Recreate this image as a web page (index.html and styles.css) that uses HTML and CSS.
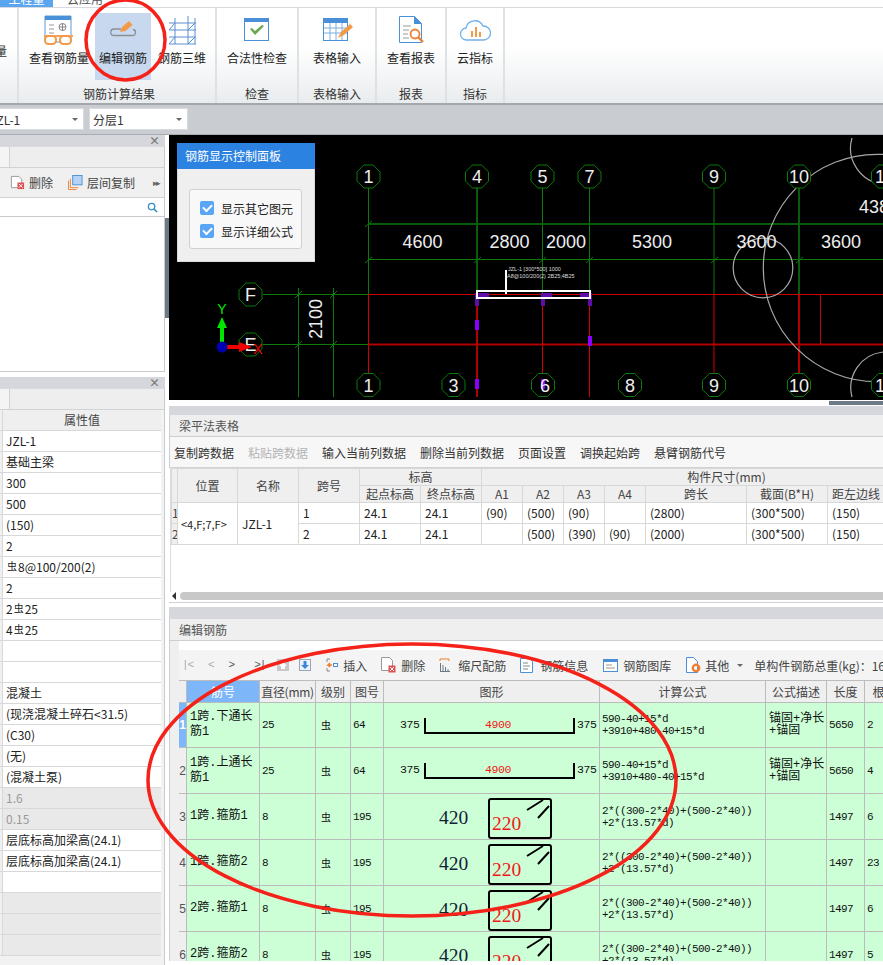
FILE: index.html
```html
<!DOCTYPE html>
<html lang="zh">
<head>
<meta charset="utf-8">
<title>编辑钢筋</title>
<link rel="stylesheet" href="styles.css">
</head>
<body>
<div class="app">
  <div class="tabs">
    <div class="tab-on"><span>工程量</span></div>
    <div class="tab-off"><span>云应用</span></div>
  </div>

  <div class="ribbon">
    <div class="group g0"><div class="btns"><div class="cut">量</div></div></div>
    <div class="group g1">
      <div class="btns">
        <div class="btn w72">
          <svg class="ico" viewBox="0 0 32 32"><path d="M2 1h26v26H2z" fill="#fff" stroke="#5b9bd5"/><path d="M2 1h26v4H2z" fill="#4a90d9"/><path d="M6 10h5M6 14h5M6 18h5" stroke="#999"/><path d="M16 12h7M19.500 8v8" stroke="#888" fill="none"/><circle cx="19.500" cy="12" r="3.500" fill="none" stroke="#888"/><path d="M1 21h29" stroke="#f4a460" stroke-width="2"/><rect x="2" y="21" width="11" height="8" rx="3.500" fill="#fff" stroke="#f29a4a" stroke-width="2"/><rect x="17" y="21" width="11" height="8" rx="3.500" fill="#fff" stroke="#f29a4a" stroke-width="2"/></svg>
          <span>查看钢筋量</span>
        </div>
        <div class="btn w56 active">
          <svg class="ico" viewBox="0 0 32 32"><path d="M14 14H7a3 3 0 0 0 0 6.500h18a3 3 0 0 0 1-6" fill="none" stroke="#8a8f96" stroke-width="1.300"/><path d="M13 17l2-5 7-6 3.500 4-7 6z" fill="#f29a4a"/></svg>
          <span>编辑钢筋</span>
        </div>
        <div class="btn w58">
          <svg class="ico" viewBox="0 0 32 32" fill="none" stroke="#5b8fd0"><path d="M3 8h27M3 15h27M3 22h27M3 29h27M9 3v26M22 1v28M29 3v26"/><path d="M3 15l6-7M3 29l6-7M22 15l7-7M22 29l7-7"/></svg>
          <span>钢筋三维</span>
        </div>
      </div>
      <div class="glabel">钢筋计算结果</div>
    </div>
    <div class="group g2">
      <div class="btns">
        <div class="btn wfull">
          <svg class="ico" viewBox="0 0 32 32"><rect x="3.500" y="3.500" width="24" height="22" fill="#fff" stroke="#4a90d9"/><path d="M3 3h25v4H3z" fill="#4a90d9"/><path d="M9 14l5 6 9-9-2-1-7 6-3-3z" fill="#6aa84f"/></svg>
          <span>合法性检查</span>
        </div>
      </div>
      <div class="glabel">检查</div>
    </div>
    <div class="group g3">
      <div class="btns">
        <div class="btn wfull">
          <svg class="ico" viewBox="0 0 32 32"><rect x="2.500" y="3.500" width="24" height="22" fill="#fff" stroke="#4a90d9"/><path d="M2 3h25v5H2z" fill="#4a90d9"/><path d="M3 13h23M3 18h23M9 8v17M15 8v17M21 8v17" stroke="#7aaee0"/><path d="M17 23l3-6 9-8 3 3-9 8z" fill="#f29a4a"/></svg>
          <span>表格输入</span>
        </div>
      </div>
      <div class="glabel">表格输入</div>
    </div>
    <div class="group g4">
      <div class="btns">
        <div class="btn wfull">
          <svg class="ico" viewBox="0 0 32 32"><path d="M4.500 1.500h15l7 7v19h-22z" fill="#fff" stroke="#4a90d9"/><path d="M19 1l8 8h-8z" fill="#4a90d9"/><path d="M8 11h8M8 15h6M8 19h5M8 23h6" stroke="#999"/><circle cx="20" cy="19" r="4.500" fill="#fff" stroke="#f07f2e" stroke-width="1.800"/><path d="M23 22l5 5" stroke="#f07f2e" stroke-width="2.400"/></svg>
          <span>查看报表</span>
        </div>
      </div>
      <div class="glabel">报表</div>
    </div>
    <div class="group g5">
      <div class="btns">
        <div class="btn wfull">
          <svg class="ico" viewBox="0 0 32 32"><path d="M8 25a6 6 0 0 1-1-12 9 9 0 0 1 17-2 7 7 0 0 1 1 14z" fill="#fff" stroke="#6fb1ea" stroke-width="1.300"/><path d="M12 16h2v6h-2zM16 12h2v10h-2zM20 17h2v5h-2z" fill="#f29a4a"/></svg>
          <span>云指标</span>
        </div>
      </div>
      <div class="glabel">指标</div>
    </div>
  </div>

  <div class="selbar">
    <div class="sel s1"><span>JZL-1</span><i class="caret"></i></div>
    <div class="sel s2"><span>分层1</span><i class="caret"></i></div>
  </div>

  <div class="main">
    <aside class="left">
      <section class="lp lp1">
        <div class="lp-head"><span class="close">×</span></div>
        <div class="lp-tabs"><div class="lp-tab"></div></div>
        <div class="lp-tools">
          <svg class="tool-ico" viewBox="0 0 16 16"><path d="M1.500 1.500h8l3 3v9h-11z" fill="#fff" stroke="#999"/><rect x="8" y="8" width="7" height="7" fill="#e05050"/><path d="M9.500 9.500l4 4M13.500 9.500l-4 4" stroke="#fff"/></svg>
          <span>删除</span>
          <svg class="tool-ico t2" viewBox="0 0 16 16"><path d="M.5 6v9.500H9" fill="none" stroke="#f07f2e"/><path d="M2.500 4v9.500H11" fill="none" stroke="#f07f2e"/><rect x="5" y=".5" width="10" height="10" fill="#b5d3f7" stroke="#4a90d9"/></svg>
          <span>层间复制</span>
          <em class="more">▸▸</em>
        </div>
        <div class="lp-search">
          <svg class="search" viewBox="0 0 12 12"><circle cx="5" cy="5" r="3.500" fill="none" stroke="#2f8fc4" stroke-width="1.400"/><path d="M7.500 7.500l3.500 3.500" stroke="#2f8fc4" stroke-width="1.600"/></svg>
        </div>
        <div class="lp-list"></div>
      </section>
      <section class="lp lp2">
        <div class="lp-head"><span class="close">×</span></div>
        <div class="lp-tabs"><div class="lp-tab"></div></div>
        <div class="prop">
          <div class="prow phead"><b></b><span>属性值</span></div>
          <div class="prow"><b></b><span>JZL-1</span></div>
          <div class="prow"><b></b><span>基础主梁</span></div>
          <div class="prow"><b></b><span>300</span></div>
          <div class="prow"><b></b><span>500</span></div>
          <div class="prow"><b></b><span>(150)</span></div>
          <div class="prow"><b></b><span>2</span></div>
          <div class="prow"><b></b><span><small class="gr">虫</small>8@100/200(2)</span></div>
          <div class="prow"><b></b><span>2</span></div>
          <div class="prow"><b></b><span>2<small class="gr">虫</small>25</span></div>
          <div class="prow"><b></b><span>4<small class="gr">虫</small>25</span></div>
          <div class="prow"><b></b><span></span></div>
          <div class="prow"><b></b><span></span></div>
          <div class="prow"><b></b><span>混凝土</span></div>
          <div class="prow"><b></b><span>(现浇混凝土碎石&lt;31.5)</span></div>
          <div class="prow"><b></b><span>(C30)</span></div>
          <div class="prow"><b></b><span>(无)</span></div>
          <div class="prow"><b></b><span>(混凝土泵)</span></div>
          <div class="prow off"><b></b><span>1.6</span></div>
          <div class="prow off"><b></b><span>0.15</span></div>
          <div class="prow"><b></b><span>层底标高加梁高(24.1)</span></div>
          <div class="prow"><b></b><span>层底标高加梁高(24.1)</span></div>
          <div class="prow"><b></b><span></span></div>
          <div class="prow off"><b></b><span></span></div>
          <div class="prow off"><b></b><span></span></div>
          <div class="prow off"><b></b><span></span></div>
        </div>
      </section>
    </aside>

    <div class="splitter"><div class="grip"></div></div>

    <div class="right">
      <div class="canvas">
        <svg class="cad" viewBox="169 135 714 265">
          <defs>
            <polygon id="oct" points="-4.600,-11.500 4.600,-11.500 11.500,-4.600 11.500,4.600 4.600,11.500 -4.600,11.500 -11.500,4.600 -11.500,-4.600" fill="#000" stroke="#0c7a0c"/>
          </defs>
          <g stroke="#0c7a0c" fill="none">
            <path d="M368.500 188V294M477 188V294M542.500 188V294M589.500 188V294M714 188V294M799 188V294"/>
            <path d="M368 259.500H883M263 294.500H368M263 344.500H368M298.500 288V397M333.500 288V397"/>
            <path d="M477 188V294M799 188V294" stroke-width="2" stroke="#0a5c0a"/>
            <path d="M368 224H883" stroke-width="2" stroke="#0a5c0a"/>
            <path d="M365 227l7-6M365 263l7-6M474 263l7-6M539 263l7-6M586 263l7-6M711 263l7-6M796 263l7-6M295 298l7-7M330 298l7-7M295 348l7-7M330 348l7-7"/>
          </g>
          <g stroke="#d40000" fill="none">
            <path d="M368.500 294V375M542.500 294V397M589.500 294V397M714 294V397"/>
            <path d="M368 294.500H883M820.500 294V344" stroke="#c80000"/>
            <path d="M477 294V397M799 294V397" stroke-width="2" stroke="#b00000"/>
            <path d="M368 344.500H883" stroke-width="2" stroke="#b00000"/>
          </g>
          <g fill="none" stroke="#a8a8a8" stroke-width="1.200">
            <circle cx="877" cy="268" r="113.700"/>
            <circle cx="763" cy="268" r="29.800"/>
            <path d="M852 138a36 36 0 0 0 31 46"/>
            <path d="M852 397a36 36 0 0 1 31-45"/>
          </g>
          <g>
            <use href="#oct" x="368.500" y="176.500"/><use href="#oct" x="477" y="176.500"/><use href="#oct" x="542.500" y="176.500"/><use href="#oct" x="589.500" y="176.500"/><use href="#oct" x="714" y="176.500"/><use href="#oct" x="799" y="176.500"/><use href="#oct" x="883" y="176.500"/>
            <use href="#oct" x="368.500" y="385"/><use href="#oct" x="453.500" y="385"/><use href="#oct" x="543" y="385"/><use href="#oct" x="630" y="385"/><use href="#oct" x="714" y="385"/><use href="#oct" x="799" y="385"/><use href="#oct" x="883" y="385"/>
            <use href="#oct" x="250.500" y="294.500"/><use href="#oct" x="250.500" y="344.500"/>
          </g>
          <g fill="#5f0ea8">
            <rect x="475" y="293" width="4" height="13"/><rect x="476" y="293" width="13" height="5"/>
            <rect x="541" y="293" width="4" height="13"/><rect x="541" y="293" width="11" height="5"/>
            <rect x="588" y="293" width="4" height="13"/><rect x="580" y="293" width="10" height="5"/>
          </g>
          <rect x="477" y="291" width="113" height="7" fill="none" stroke="#fff" stroke-width="2"/>
          <path d="M506 270V294" stroke="#fff" stroke-width="2"/>
          <g fill="#8a00ff">
            <rect x="475" y="320" width="4" height="10"/><rect x="588" y="336" width="4" height="10"/>
            <rect x="475" y="379" width="4" height="10"/><rect x="541" y="379" width="4" height="10"/>
          </g>
          <g class="cad-t">
            <text x="368.500" y="183">1</text><text x="477" y="183">4</text><text x="542.500" y="183">5</text><text x="589.500" y="183">7</text><text x="714" y="183">9</text><text x="799" y="183">10</text><text x="880" y="183">1</text>
            <text x="368.500" y="391.500">1</text><text x="453.500" y="391.500">3</text><text x="545" y="391.500">6</text><text x="630" y="391.500">8</text><text x="714" y="391.500">9</text><text x="799" y="391.500">10</text><text x="880" y="391.500">1</text>
            <text x="250.500" y="301">F</text><text x="250.500" y="351">E</text>
            <text x="422.500" y="248">4600</text><text x="509.500" y="248">2800</text><text x="566" y="248">2000</text><text x="652" y="248">5300</text><text x="756.500" y="248">3600</text><text x="841" y="248">3600</text><text x="874" y="213">438</text>
            <text x="322" y="319" transform="rotate(-90 322 319)">2100</text>
          </g>
          <g class="cad-tiny">
            <text x="508" y="271">JZL-1 [300*500] 1000</text>
            <text x="507" y="278">A8@100/200(2) 2B25;4B25</text>
          </g>
          <path d="M222 346V326" stroke="#00e600" stroke-width="4"/>
          <path d="M222 317l5 11h-10z" fill="#00e600"/>
          <path d="M222 347H240" stroke="#f00000" stroke-width="4"/>
          <path d="M252 347l-13 5v-10z" fill="#f00000"/>
          <circle cx="222" cy="347" r="5.500" fill="#0000b0"/>
          <text class="ax-y" x="222" y="314">Y</text>
          <text class="ax-x" x="258" y="354">X</text>
        </svg>
        <div class="ctl">
          <div class="ctl-head">钢筋显示控制面板</div>
          <div class="ctl-body">
            <div class="ctl-box">
              <label class="chk"><i class="tick"></i><span>显示其它图元</span></label>
              <label class="chk"><i class="tick"></i><span>显示详细公式</span></label>
            </div>
          </div>
        </div>
      </div>
      <div class="strip"><div class="strip-thumb"></div></div>

      <section class="pn pn1">
        <div class="pn-head"></div>
        <div class="pn-title">梁平法表格</div>
        <div class="beam-tools">
          <span>复制跨数据</span><span class="dis">粘贴跨数据</span><span>输入当前列数据</span><span>删除当前列数据</span><span>页面设置</span><span>调换起始跨</span><span>悬臂钢筋代号</span>
        </div>
        <div class="beam-wrap">
          <table class="beam">
            <colgroup><col class="c0"><col class="c1"><col class="c2"><col class="c3"><col class="c4"><col class="c4"><col class="c5"><col class="c5"><col class="c5"><col class="c5"><col class="c6"><col class="c7"><col class="c8"></colgroup>
            <tr class="h1"><th class="rn" rowspan="2"></th><th rowspan="2">位置</th><th rowspan="2">名称</th><th rowspan="2">跨号</th><th colspan="2">标高</th><th colspan="7">构件尺寸(mm)</th></tr>
            <tr class="h2"><th>起点标高</th><th>终点标高</th><th>A1</th><th>A2</th><th>A3</th><th>A4</th><th>跨长</th><th>截面(B*H)</th><th class="ll">距左边线</th></tr>
            <tr><th class="rn">1</th><td rowspan="2" class="pos">&lt;4,F;7,F&gt;</td><td rowspan="2">JZL-1</td><td>1</td><td>24.1</td><td>24.1</td><td>(90)</td><td>(500)</td><td>(90)</td><td></td><td>(2800)</td><td>(300*500)</td><td>(150)</td></tr>
            <tr><th class="rn">2</th><td>2</td><td>24.1</td><td>24.1</td><td></td><td>(500)</td><td>(390)</td><td>(90)</td><td>(2000)</td><td>(300*500)</td><td>(150)</td></tr>
          </table>
        </div>
      </section>

      <section class="pn pn2">
        <div class="pn-head"></div>
        <div class="pn-title">编辑钢筋</div>
        <div class="rebar-area">
          <div class="rebar-tools">
            <span class="nav n1">|&lt;</span><span class="nav n2">&lt;</span><span class="nav n3">&gt;</span><span class="nav n4">&gt;|</span>
            <svg class="t-ico up" viewBox="0 0 12 12"><rect width="12" height="12" fill="#c9c9c9"/><path d="M6 3l4 4H8v3H4V7H2z" fill="#fff"/></svg>
            <svg class="t-ico down" viewBox="0 0 12 12"><rect x=".5" y=".5" width="11" height="11" fill="#eef3f8" stroke="#98a8b8"/><path d="M6 10L2 6h2.500V2h3v4H10z" fill="#3a87d8"/></svg>
            <svg class="t-ico ins" viewBox="0 0 12 14"><path d="M1 1h3M1 13h3M1 1v3M1 13v-3" stroke="#888" fill="none"/><path d="M6 7l-4 0 2-2M2 7l2 2" stroke="#f07f2e" stroke-width="1.500" fill="none"/><rect x="7.500" y="5.500" width="4" height="3" fill="#fff" stroke="#4a90d9"/></svg>
            <span class="t-txt">插入</span>
            <svg class="t-ico del" viewBox="0 0 15 16"><path d="M.5.500h8l3 3v10h-11z" fill="#fff" stroke="#999"/><rect x="7.500" y="8.500" width="7" height="7" fill="#e05050"/><path d="M9 10l4 4M13 10l-4 4" stroke="#fff"/></svg>
            <span class="t-txt">删除</span>
            <svg class="t-ico scl" viewBox="0 0 12 14"><path d="M1 1h9M1 1v2M10 1v2" stroke="#f07f2e" fill="none"/><path d="M1.500 5v8M4 7v6M6.500 9v4M9 11v2M1 13.500h10" stroke="#6a7a88"/></svg>
            <span class="t-txt">缩尺配筋</span>
            <svg class="t-ico inf" viewBox="0 0 13 15"><path d="M.5.500h9l3 3v11H.5z" fill="#fff" stroke="#4a90d9"/><path d="M3 5h5M3 8h7M3 11h5" stroke="#888"/></svg>
            <span class="t-txt">钢筋信息</span>
            <svg class="t-ico lib" viewBox="0 0 15 13"><rect x=".5" y=".5" width="14" height="12" fill="#fff" stroke="#4a90d9"/><path d="M0 0h15v3H0z" fill="#4a90d9"/><path d="M3 6h6M3 9h9" stroke="#998"/></svg>
            <span class="t-txt">钢筋图库</span>
            <svg class="t-ico oth" viewBox="0 0 15 16"><path d="M.5.500h7l4 4v11h-11z" fill="#fff" stroke="#4a90d9"/><circle cx="10" cy="11" r="3.200" fill="none" stroke="#f07f2e" stroke-width="2.400"/></svg>
            <span class="t-txt">其他</span>
            <i class="caret tc"></i>
            <span class="t-txt total">单构件钢筋总重(kg)：16</span>
          </div>
          <table class="rebar">
            <colgroup><col class="r0"><col class="r1"><col class="r2"><col class="r3"><col class="r4"><col class="r5"><col class="r6"><col class="r7"><col class="r8"><col class="r9"></colgroup>
            <tr class="rh"><th class="no"></th><th class="sel-h">筋号</th><th>直径(mm)</th><th>级别</th><th>图号</th><th>图形</th><th>计算公式</th><th>公式描述</th><th>长度</th><th>根数</th></tr>
            <tr class="rr first"><th class="no cur">1</th><td class="nm">1跨.下通长筋1</td><td class="m">25</td><td class="gd">虫</td><td class="m">64</td><td class="sh"><svg class="shape" viewBox="0 0 216 45"><text class="sm" x="16" y="25">375</text><text class="sm red" x="101" y="25">4900</text><text class="sm" x="193" y="25">375</text><path d="M41 15v15h149V15" fill="none" stroke="#000" stroke-width="2"/></svg></td><td class="f">590-40+15*d<br>+3910+480-40+15*d</td><td class="d">锚固+净长<br>+锚固</td><td class="m">5650</td><td class="m">2</td></tr>
            <tr class="rr"><th class="no">2</th><td class="nm">1跨.上通长筋1</td><td class="m">25</td><td class="gd">虫</td><td class="m">64</td><td class="sh"><svg class="shape" viewBox="0 0 216 45"><text class="sm" x="16" y="25">375</text><text class="sm red" x="101" y="25">4900</text><text class="sm" x="193" y="25">375</text><path d="M41 15v15h149V15" fill="none" stroke="#000" stroke-width="2"/></svg></td><td class="f">590-40+15*d<br>+3910+480-40+15*d</td><td class="d">锚固+净长<br>+锚固</td><td class="m">5650</td><td class="m">4</td></tr>
            <tr class="rr"><th class="no">3</th><td class="nm">1跨.箍筋1</td><td class="m">8</td><td class="gd">虫</td><td class="m">195</td><td class="sh"><svg class="shape" viewBox="0 0 216 45"><text class="ser" x="55" y="30">420</text><rect x="105" y="5" width="62" height="39" rx="2" fill="none" stroke="#000" stroke-width="2"/><text class="ser red" x="108" y="36">220</text><path d="M143 16l16-10M154 24l11-12" stroke="#000" stroke-width="2"/></svg></td><td class="f">2*((300-2*40)+(500-2*40))<br>+2*(13.57*d)</td><td class="d"></td><td class="m">1497</td><td class="m">6</td></tr>
            <tr class="rr"><th class="no">4</th><td class="nm">1跨.箍筋2</td><td class="m">8</td><td class="gd">虫</td><td class="m">195</td><td class="sh"><svg class="shape" viewBox="0 0 216 45"><text class="ser" x="55" y="30">420</text><rect x="105" y="5" width="62" height="39" rx="2" fill="none" stroke="#000" stroke-width="2"/><text class="ser red" x="108" y="36">220</text><path d="M143 16l16-10M154 24l11-12" stroke="#000" stroke-width="2"/></svg></td><td class="f">2*((300-2*40)+(500-2*40))<br>+2*(13.57*d)</td><td class="d"></td><td class="m">1497</td><td class="m">23</td></tr>
            <tr class="rr"><th class="no">5</th><td class="nm">2跨.箍筋1</td><td class="m">8</td><td class="gd">虫</td><td class="m">195</td><td class="sh"><svg class="shape" viewBox="0 0 216 45"><text class="ser" x="55" y="30">420</text><rect x="105" y="5" width="62" height="39" rx="2" fill="none" stroke="#000" stroke-width="2"/><text class="ser red" x="108" y="36">220</text><path d="M143 16l16-10M154 24l11-12" stroke="#000" stroke-width="2"/></svg></td><td class="f">2*((300-2*40)+(500-2*40))<br>+2*(13.57*d)</td><td class="d"></td><td class="m">1497</td><td class="m">6</td></tr>
            <tr class="rr"><th class="no">6</th><td class="nm">2跨.箍筋2</td><td class="m">8</td><td class="gd">虫</td><td class="m">195</td><td class="sh"><svg class="shape" viewBox="0 0 216 45"><text class="ser" x="55" y="30">420</text><rect x="105" y="5" width="62" height="39" rx="2" fill="none" stroke="#000" stroke-width="2"/><text class="ser red" x="108" y="36">220</text><path d="M143 16l16-10M154 24l11-12" stroke="#000" stroke-width="2"/></svg></td><td class="f">2*((300-2*40)+(500-2*40))<br>+2*(13.57*d)</td><td class="d"></td><td class="m">1497</td><td class="m">5</td></tr>
          </table>
        </div>
      </section>
    </div>
  </div>

  <svg class="marks" viewBox="0 0 883 965">
    <path class="sb-arrow" d="M172 596l4-4v8z"/>
    <path class="sb-thumb" d="M184 592H883V600H184a4 4 0 0 1 0-8z"/>
    <ellipse cx="125.500" cy="40" rx="39.500" ry="40" />
    <ellipse cx="412" cy="780" rx="264" ry="136" />
  </svg>
</div>
</body>
</html>
```

FILE: styles.css
```css
* { box-sizing: border-box; }
html, body { margin: 0; padding: 0; height: 100%; overflow: hidden; background: #fff; }
body { font-family: "Noto Sans CJK SC", "Liberation Sans", sans-serif; font-size: 12px; color: #333; }
.app { position: relative; width: 883px; height: 965px; overflow: hidden; display: flex; flex-direction: column; }

/* top tabs */
.tabs { height: 8px; display: flex; border-bottom: 1px solid #d8dade; overflow: hidden; flex: none; }
.tab-on { width: 53px; height: 8px; background: #5aa5f0; color: #fff; text-align: center; position: relative; }
.tab-off { margin-left: 14px; color: #555; }
.tabs span { display: block; line-height: 16px; margin-top: -9px; }

/* ribbon */
.ribbon { height: 97px; flex: none; display: flex; background: linear-gradient(#fff 40%, #e9ecee); border-bottom: 2px solid #a4a8ad; }
.group { display: flex; flex-direction: column; border-right: 2px solid #dfe2e5; height: 95px; }
.g0 { width: 19px; }
.g1 { width: 198px; padding-left: 4px; }
.g2 { width: 82px; }
.g3 { width: 78px; }
.g4 { width: 70px; }
.g5 { width: 58px; }
.btns { display: flex; height: 74px; padding-top: 5px; flex: none; }
.cut { width: 100%; margin-left: -5px; padding-top: 29px; }
.btn { display: flex; flex-direction: column; align-items: center; height: 67px; color: #222; white-space: nowrap; overflow: visible; }
.btn span { line-height: 16px; margin-top: 3px; }
.w72 { width: 72px; }
.w56 { width: 56px; }
.w58 { width: 58px; margin-left: 2px; }
.wfull { width: 100%; }
.active { background: #c8d8ee; }
.ico { width: 32px; height: 32px; display: block; margin-top: 2px; flex: none; }
.glabel { text-align: center; line-height: 16px; color: #333; padding-top: 4px; }

/* selectors */
.selbar { height: 30px; flex: none; background: #c9ccd1; border-bottom: 1px solid #a9adb2; display: flex; gap: 5px; padding-top: 3px; }
.sel { height: 22px; background: #fff; border: 1px solid #d8dade; display: flex; align-items: center; justify-content: space-between; padding: 0 5px 0 3px; color: #333; overflow: hidden; }
.s1 { width: 85px; padding-left: 0; margin-left: -1px; }
.s1 span { margin-left: -10px; }
.s2 { width: 99px; }
.caret { width: 0; height: 0; border: 3px solid transparent; border-top: 3px solid #666; border-bottom: 0; display: block; }

/* main */
.main { flex: 1; min-height: 0; display: flex; }
.left { width: 165px; flex: none; background: #fff; }
.lp-head { height: 11px; background: #d5d7dc; position: relative; }
.close { position: absolute; right: 5px; top: -2px; line-height: 14px; font-size: 11px; font-weight: 700; color: #777; }
.lp-tabs { height: 22px; background: #eee; border-top: 1px solid #d8dade; border-bottom: 1px solid #d0d2d6; border-right: 1px solid #c8cacd; }
.lp-tab { width: 10px; height: 100%; background: #f4f4f4; border-right: 1px solid #d0d2d6; }
.lp-tools { height: 30px; background: #f0f0f0; border-bottom: 1px solid #d0d2d6; border-right: 1px solid #c8cacd; display: flex; align-items: center; color: #444; padding-left: 10px; white-space: nowrap; }
.tool-ico { width: 15px; height: 15px; margin-right: 4px; flex: none; }
.t2 { margin-left: 15px; }
.more { font-style: normal; color: #666; font-size: 9px; margin-left: auto; margin-right: 2px; letter-spacing: -2px; padding-right: 3px; }
.lp-search { height: 19px; background: #fff; border-bottom: 1px solid #c8cacd; border-right: 1px solid #c8cacd; display: flex; justify-content: flex-end; align-items: center; padding-right: 6px; }
.search { width: 11px; height: 11px; }
.lp-list { height: 155px; background: #fff; border-right: 1px solid #c8cacd; border-bottom: 1px solid #c8cacd; }
.lp1 { height: 242px; }
.prop { height: 568px; border-right: 1px solid #c8cacd; padding-right: 3px; background: #f2f2f2; }
.prow { height: 21px; display: flex; border-bottom: 1px solid #d8d8d8; background: #fff; line-height: 20px; color: #222; }
.prow b { width: 3px; border-right: 1px solid #d8d8d8; flex: none; background: #f0f0f0; }
.prow span { padding-left: 3px; white-space: nowrap; }
.gr { font-size: 10px; position: relative; top: -2px; margin: 0 1px; }
.phead { background: #efefef; color: #444; }
.phead span { flex: 1; text-align: center; padding: 0; }
.off { background: #e9e9e9; color: #999; }

/* splitter */
.splitter { width: 4px; flex: none; background: #fff; padding-top: 83px; }
.grip { height: 100px; background: #6c7a85; }

/* right */
.right { width: 714px; flex: none; }
.canvas { height: 265px; background: #000; position: relative; overflow: hidden; }
.cad { display: block; width: 714px; height: 265px; }
.cad-t text { fill: #eee; font-family: "Liberation Sans", sans-serif; font-size: 18px; text-anchor: middle; }
.cad-tiny text { fill: #ddd; font-family: "Liberation Sans", sans-serif; font-size: 5.500px; }
.ax-y, .ax-x { font-family: "Liberation Sans", sans-serif; font-size: 14px; text-anchor: middle; }
.ax-y { fill: #00e600; }
.ax-x { fill: #f00000; }
.ctl { position: absolute; left: 8px; top: 8px; width: 138px; height: 119px; background: #efefef; border: 1px solid #d8dade; }
.ctl-head { height: 26px; background: #2c82e0; color: #fff; line-height: 25px; padding-left: 8px; font-size: 12px; margin: -1px -1px 0; }
.ctl-body { padding: 20px 11px 0; }
.ctl-box { width: 113px; height: 60px; background: #f8f8f8; border: 1px solid #cfd1d5; border-radius: 3px; padding: 9px 0 0 10px; display: flex; flex-direction: column; gap: 5px; }
.chk { display: flex; align-items: center; height: 18px; color: #222; white-space: nowrap; }
.tick { width: 14px; height: 14px; background: #5aa5f5; border-radius: 2px; margin-right: 7px; flex: none; position: relative; }
.tick::after { content: ""; position: absolute; left: 3px; top: 2.500px; width: 7px; height: 4px; border-left: 2px solid #fff; border-bottom: 2px solid #fff; transform: rotate(-45deg); }

.strip { height: 6px; background: #fff; display: flex; justify-content: flex-end; align-items: flex-start; padding-top: 1px; }
.strip-thumb { width: 54px; height: 4px; background: #6c7a85; }
.pn-head { height: 9px; background: #d5d7dc; }
.pn-title { height: 22px; background: #efefef; border-bottom: 1px solid #ccced2; border-left: 1px solid #ccced2; color: #555; line-height: 21px; padding-left: 9px; }
.pn1 { height: 197px; border-bottom: 1px solid #d0d2d6; overflow: hidden; }
.beam-tools { height: 31px; background: #f7f7f7; border-bottom: 1px solid #d0d2d6; border-left: 1px solid #ccced2; display: flex; align-items: center; gap: 14px; padding-left: 4px; white-space: nowrap; color: #333; }
.dis { color: #b4b4b4; }
.beam-wrap { margin-left: 1px; width: 713px; height: 124px; overflow: hidden; border-left: 1px solid #ddd; }
.beam { border-collapse: collapse; table-layout: fixed; width: 800px; }
.c0 { width: 6px; } .c1 { width: 60px; } .c2 { width: 61px; } .c3 { width: 61px; } .c4 { width: 61px; }
.c5 { width: 41px; } .c6 { width: 101px; } .c7 { width: 81px; } .c8 { width: 144px; }
.beam th, .beam td { border: 1px solid #d8d8d8; padding: 0 4px; height: 17px; line-height: 16px; font-weight: 400; overflow: hidden; white-space: nowrap; text-align: left; color: #222; }
.beam th { background: #efefef; text-align: center; color: #444; padding: 0; }
.beam .ll { text-align: left; padding-left: 4px; }
.beam tr:nth-child(n+3) td, .beam tr:nth-child(n+3) th { height: 21px; }
.h2 th { height: 17px; }
.beam .rn { background: #efefef; text-align: left; padding-left: 0; font-size: 12px; }
.beam .pos { font-size: 11px; padding-left: 3px; }
.pn2 { margin-top: 4px; }
.pn2 .pn-head { height: 12px; }
.rebar-area { background: #fff; padding: 9px 0 0 0; position: relative; height: 320px; overflow: hidden; }
.rebar-tools { height: 30px; margin-left: 9px; width: 705px; border-left: 1px solid #bcbcbc; background: #f4f4f4; display: flex; align-items: center; color: #444; white-space: nowrap; font-size: 12px; }
.rebar-area::before { content: ""; position: absolute; left: 0; top: 0; bottom: 0; width: 9px; background: #efefef; border-left: 1px solid #ccced2; }
.nav { font-family: "Liberation Mono", monospace; font-size: 11px; color: #555; width: 11px; text-align: center; }
.n1 { margin-left: 3px; color: #aaa; letter-spacing: -1px; }
.n2 { margin-left: 15px; color: #aaa; }
.n3 { margin-left: 14px; }
.n4 { margin-left: 19px; letter-spacing: -1px; }
.t-ico { flex: none; display: block; }
.up { width: 12px; height: 12px; margin-left: 12px; }
.down { width: 12px; height: 12px; margin-left: 10px; }
.ins { width: 12px; height: 14px; margin-left: 15px; margin-right: 5px; }
.del { width: 15px; height: 16px; margin-left: 14px; margin-right: 5px; }
.scl { width: 12px; height: 14px; margin-left: 14px; margin-right: 7px; }
.inf { width: 13px; height: 15px; margin-left: 14px; margin-right: 7px; }
.lib { width: 15px; height: 13px; margin-left: 15px; margin-right: 5px; }
.oth { width: 15px; height: 16px; margin-left: 15px; margin-right: 4px; }
.tc { margin-left: 8px; }
.total { margin-left: 11px; }
.rebar { border-collapse: collapse; table-layout: fixed; width: 726px; margin-left: 9px; font-family: "Liberation Mono", "Noto Sans CJK SC", monospace; color: #111; background: #ccffd6; }
.r0 { width: 8px; } .r1 { width: 73px; } .r2 { width: 56px; } .r3 { width: 35px; } .r4 { width: 33px; } .r5 { width: 216px; } .r6 { width: 166px; } .r7 { width: 61px; } .r8 { width: 38px; } .r9 { width: 40px; }
.rebar th, .rebar td { border: 1px solid #bcbcbc; padding: 0; font-weight: 400; overflow: hidden; }
.rh th { height: 22px; background: #efefef; color: #444; font-family: "Noto Sans CJK SC", sans-serif; white-space: nowrap; }
.rh th:nth-child(3) { font-size: 12px; letter-spacing: -.3px; }
.rebar .sel-h { background: #7eb7f9; color: #fff; }
.rr td { height: 46px; padding-left: 2px; line-height: 14px; }
.first td, .first th { height: 45px; }
.rr td.nm { padding-left: 3px; line-height: 15px; }
.rebar .no { background: #efefef; color: #555; font-size: 12px; text-align: center; font-family: "Liberation Sans", sans-serif; }
.rebar .cur { background: #7eb7f9; color: #fff; font-weight: 700; }
.rr td.m { font-size: 11px; letter-spacing: -.6px; }
.rr td.gd { padding: 0 0 0 5px; font-size: 10px; font-family: "Noto Sans CJK SC", sans-serif; }
.rr td.sh { padding: 0; }
.rr td.f { font-size: 11px; letter-spacing: -.6px; line-height: 12px; white-space: nowrap; }
.rr td.d { padding-left: 3px; line-height: 12px; font-size: 12px; white-space: nowrap; }
.shape { display: block; width: 216px; height: 45px; }
.first .shape { margin-bottom: -1px; }
.sm { font-family: "Liberation Mono", monospace; font-size: 11.500px; letter-spacing: -.4px; fill: #111; }
.ser { font-family: "Liberation Serif", serif; font-size: 19.500px; fill: #123; }
.red { fill: #f01818; }

/* items drawn over the panels */
.marks { position: absolute; left: 0; top: 0; width: 883px; height: 965px; pointer-events: none; }
.marks ellipse { fill: none; stroke: #f5221a; stroke-width: 3.500px; }
.sb-arrow { fill: #333; }
.sb-thumb { fill: #c8c8c8; }
```
